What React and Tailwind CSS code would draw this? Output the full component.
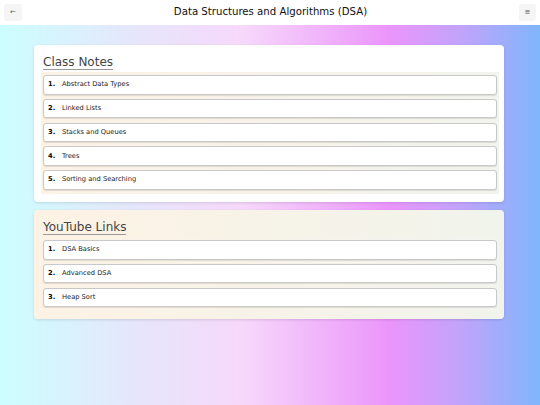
import React from "react";

const notes = ["Abstract Data Types", "Linked Lists", "Stacks and Queues", "Trees", "Sorting and Searching"];
const links = ["DSA Basics", "Advanced DSA", "Heap Sort"];

function Item({ n, label }) {
  return (
    <div className="h-[19.5px] flex items-center bg-white border border-[#c8c8c8] rounded-[3px] shadow-[0_1px_1px_rgba(0,0,0,0.1)] pl-[4px] text-[6.7px] leading-none text-[#222]">
      <span className="font-bold text-black w-[14px]">{n}.</span>
      <span>{label}</span>
    </div>
  );
}

function Card({ title, items, tinted }) {
  return (
    <div
      className={
        "rounded-[4px] shadow-[0_1px_3px_rgba(0,0,0,0.12)] pt-[10px] pb-[7.5px] pl-[7px] pr-[5px] " +
        (tinted ? "bg-[linear-gradient(to_right,#fdf2e4,#f1f4ec)]" : "bg-white")
      }
    >
      <div className="pl-[2px] flex">
        <span className="block text-[12px] leading-[14px] text-[#444] border-b border-[#9a9a9a]">{title}</span>
      </div>
      <div className="mt-[2px] pt-[3px] pb-[4.5px] px-[2px] bg-[linear-gradient(to_right,#fcf2e5,#f2f4ee)] flex flex-col gap-[4.25px]">
        {items.map((t, i) => (
          <Item key={t} n={i + 1} label={t} />
        ))}
      </div>
    </div>
  );
}

export default function App() {
  return (
    <div className="min-h-screen flex flex-col font-['DejaVu_Sans',sans-serif]">
      <div className="h-[25px] bg-white flex items-center justify-between px-[4px] shrink-0">
        <div className="w-[18px] h-[17px] rounded-[3px] bg-[#f5f5f5] flex items-center justify-center text-[7px] text-[#555] leading-none">←</div>
        <div className="font-['DejaVu_Sans_Condensed','DejaVu_Sans',sans-serif] text-[11.3px] text-[#111]">Data Structures and Algorithms (DSA)</div>
        <div className="w-[17px] h-[17px] rounded-[3px] bg-[#f5f5f5] flex items-center justify-center text-[7px] text-[#555] leading-none">≡</div>
      </div>
      <div className="flex-1 bg-[linear-gradient(to_right,#ccfeff_0%,#e6e6fb_25%,#f7d8fb_45%,#eb95fb_72%,#c3a3fb_85%,#7fb6fc_100%)] pt-[20px]">
        <div className="w-[470px] ml-[34px] flex flex-col gap-[8.5px]">
          <Card title="Class Notes" items={notes} />
          <Card title="YouTube Links" items={links} tinted />
        </div>
      </div>
    </div>
  );
}
